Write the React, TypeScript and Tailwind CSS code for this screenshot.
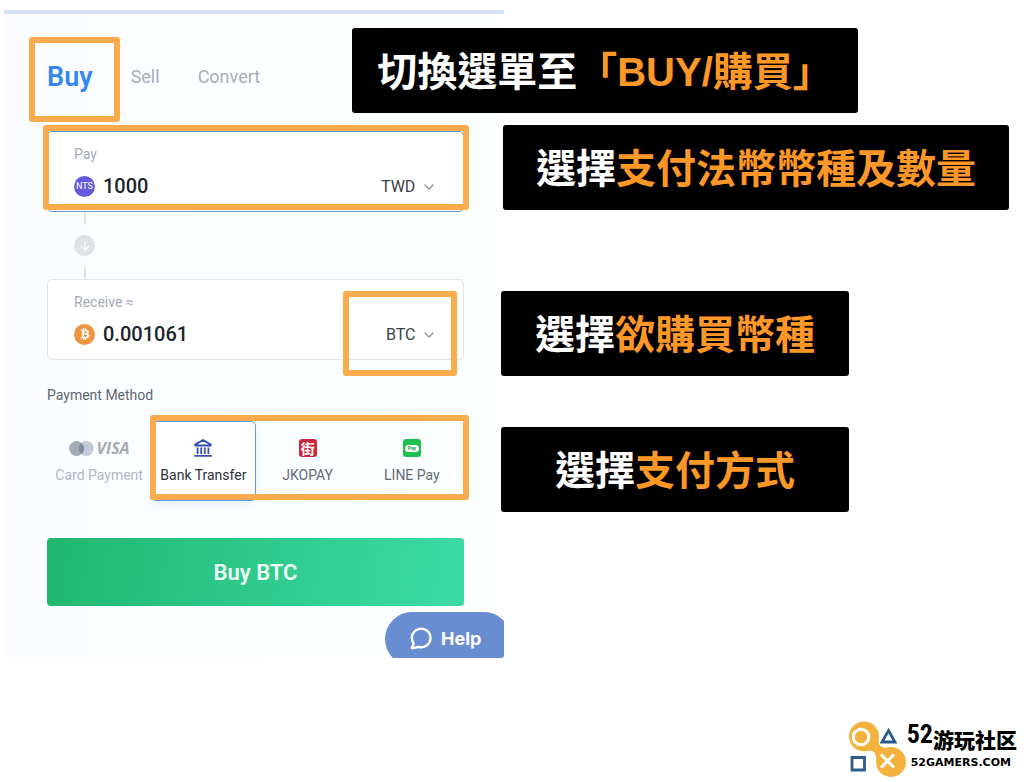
import type { ReactNode } from "react";
import { ArrowDown, ChevronDown } from "lucide-react";
import { FaBtc } from "react-icons/fa";

function Highlight({ className }: { className: string }) {
  return (
    <span
      aria-hidden="true"
      className={`pointer-events-none absolute z-10 rounded-[3px] border-6 border-[#f9ab4e] ${className}`}
    />
  );
}

function Callout({ className, lead, children }: { className: string; lead: string; children: ReactNode }) {
  return (
    <p
      className={`relative z-20 rounded-[3px] bg-black pt-[14px] pb-[10px] text-center text-[40px] leading-[61px] font-bold whitespace-nowrap text-white ${className}`}
    >
      {lead}
      <span className="text-[#fd9727]">{children}</span>
    </p>
  );
}

interface AmountBoxProps {
  id: string;
  label: string;
  value: string;
  currency: string;
  icon: ReactNode;
  borderClass: string;
  children: ReactNode;
}

function AmountBox({ id, label, value, currency, icon, borderClass, children }: AmountBoxProps) {
  return (
    <div className={`relative rounded-[5px] border bg-white pt-3 pr-[26px] pb-[13px] pl-[26px] ${borderClass}`}>
      <label htmlFor={id} className="block text-sm leading-5 text-[#a3aab9]">
        {label}
      </label>
      <div className="mt-[10px] flex h-6 items-center">
        {icon}
        <input
          id={id}
          defaultValue={value}
          className="ml-2 w-0 min-w-0 flex-1 bg-transparent text-xl leading-6 font-medium text-[#20242b] outline-none"
        />
        <div className="flex items-center gap-[5px] pt-0.5">
          <select
            aria-label={`${label} currency`}
            className="appearance-none bg-transparent text-base leading-6 text-[#3b404a] outline-none"
          >
            <option>{currency}</option>
          </select>
          <ChevronDown className="size-4 text-[#8d929b]" strokeWidth={2} />
        </div>
      </div>
      {children}
    </div>
  );
}

function BankIcon() {
  return (
    <svg viewBox="0 0 20 20" className="size-5" fill="none" stroke="#3350b0" strokeWidth="1.8">
      <path d="M2.2 6.6 10 2l7.800 4.600v.9H2.200z" strokeLinejoin="round" />
      <path d="M4.600 9.500v6.500M8.200 9.500v6.500M11.800 9.500v6.500M15.400 9.500v6.500M1.200 17.900h17.600" />
    </svg>
  );
}

function CardBrands() {
  return (
    <span className="flex h-5 items-center gap-[3px]">
      <svg viewBox="0 0 25 15" className="h-[15px] w-[25px]">
        <circle cx="17.3" cy="7.5" r="7.4" fill="#c3cbd8" />
        <circle cx="7.6" cy="7.5" r="7.4" fill="#a4acb8" />
        <path d="M12.45 1.900a7.400 7.400 0 0 1 0 11.200 7.400 7.400 0 0 1 0-11.200z" fill="#828c99" />
      </svg>
      <span className="font-['Open_Sans',sans-serif] text-base leading-5 font-bold text-[#a6abb5] italic">VISA</span>
    </span>
  );
}

function JkoIcon() {
  return (
    <span className="flex size-5 items-center justify-center">
      <span className="flex size-[18px] items-center justify-center rounded-[3px] bg-[#c9283c] font-['Noto_Sans_CJK_TC',sans-serif] text-sm leading-none font-bold text-white">
        街
      </span>
    </span>
  );
}

function LinePayIcon() {
  return (
    <span className="flex size-5 items-center justify-center">
      <span className="flex size-[18px] items-center justify-center rounded-[3px] bg-[#20c04f]">
        <span className="flex h-[7px] w-[14px] items-center justify-center rounded-full bg-white text-[5px] leading-none font-bold text-[#20a050]">
          Pay
        </span>
      </span>
    </span>
  );
}

const methods = [
  { id: "card", name: "Card Payment", icon: <CardBrands />, text: "text-[#b3b8c1]", box: "border-transparent" },
  {
    id: "bank",
    name: "Bank Transfer",
    icon: <BankIcon />,
    text: "text-[#2d323b]",
    box: "border-[#5b9cf0] bg-white shadow-[0_3px_6px_rgba(90,140,220,0.12)]",
  },
  { id: "jko", name: "JKOPAY", icon: <JkoIcon />, text: "text-[#656b76]", box: "border-transparent" },
  { id: "line", name: "LINE Pay", icon: <LinePayIcon />, text: "text-[#656b76]", box: "border-transparent" },
];

function Connector() {
  return (
    <div className="ml-[27px] flex w-[21px] flex-col items-center">
      <span className="h-3 w-0.5 bg-[#e2e4e8]" />
      <span className="my-[11px] flex size-[21px] items-center justify-center rounded-full bg-[#e0e2e7]">
        <ArrowDown className="size-[14px] text-white" strokeWidth={2} />
      </span>
      <span className="h-3 w-0.5 bg-[#e2e4e8]" />
    </div>
  );
}

function TradePanel() {
  return (
    <section className="w-[500px] shrink-0 border-t-4 border-[#d7e1f3] bg-linear-to-r from-[#fafcff] to-[#fcfffe] font-[Roboto,sans-serif]">
      <form className="pt-[47px] pr-10 pl-[43px]" onSubmit={(e) => e.preventDefault()}>
        <nav className="flex items-center gap-[38px] text-lg leading-8 text-[#a9adb5]">
          <span className="relative flex">
            <button type="button" className="text-[27px] leading-8 font-semibold text-[#3487f1]">
              Buy
            </button>
            <Highlight className="-top-6 -right-[27px] -bottom-[29px] -left-[18px]" />
          </span>
          <button type="button">Sell</button>
          <button type="button">Convert</button>
        </nav>

        <div className="mt-[38px]">
          <AmountBox
            id="pay"
            label="Pay"
            value="1000"
            currency="TWD"
            borderClass="border-[#5f9ccb]"
            icon={
              <span className="flex size-[21px] items-center justify-center rounded-full bg-[#635bdc] text-[9px] leading-none text-white">
                NTS
              </span>
            }
          >
            <Highlight className="-top-[7px] -right-[6px] bottom-px -left-[5px]" />
          </AmountBox>
          <Connector />
          <AmountBox
            id="receive"
            label="Receive ≈"
            value="0.001061"
            currency="BTC"
            borderClass="border-[#e3e5e9]"
            icon={
              <span className="flex size-[21px] items-center justify-center rounded-full bg-[#f0953f]">
                <FaBtc className="size-3 text-white" />
              </span>
            }
          >
            <Highlight className="top-[11px] right-[6px] -bottom-[17px] w-[114px]" />
          </AmountBox>
        </div>

        <fieldset className="mt-[25px]">
          <legend className="text-sm leading-5 text-[#5f6673]">Payment Method</legend>
          <div className="relative mt-4 grid grid-cols-4">
            {methods.map((m) => (
              <label
                key={m.id}
                className={`flex flex-col items-center rounded-[5px] border pt-4 pb-[15px] text-sm leading-5 whitespace-nowrap ${m.box} ${m.text}`}
              >
                <input type="radio" name="method" value={m.id} defaultChecked={m.id === "bank"} className="sr-only" />
                {m.icon}
                <span className="mt-[7px]">{m.name}</span>
              </label>
            ))}
            <Highlight className="-top-[6px] -right-[5px] bottom-px left-[103px]" />
          </div>
        </fieldset>

        <button
          type="submit"
          className="mt-[37px] w-full rounded-[4px] bg-linear-100 from-[#20b770] to-[#3cdba6] pt-[19px] pb-[17px] text-[22px] leading-8 font-semibold text-[#effcf6]"
        >
          Buy BTC
        </button>
      </form>

      <div className="mt-[6px] ml-auto h-[46px] w-[119px] overflow-hidden rounded-b-[3px]">
        <button
          type="button"
          className="flex h-[54px] w-[126px] items-center gap-2 rounded-full bg-[#688dd1] pl-[24px] font-[Inter,sans-serif] text-lg font-bold text-white"
        >
          <svg viewBox="0 0 24 24" className="size-6" fill="none" stroke="currentColor" strokeWidth="2.4" strokeLinejoin="round">
            <path d="M4.500 16.200A9.300 9.300 0 1 1 9.300 19.800c-1.900 1-4.300 1.400-6.600 1.200 1-1.500 1.800-3 1.800-4.800z" />
          </svg>
          Help
        </button>
      </div>
    </section>
  );
}

function SiteMark() {
  return (
    <a href="#" className="flex items-start text-black">
      <svg viewBox="0 0 59 58" className="h-[58px] w-[59px]" fill="none">
        <g fill="#f3b33e">
          <circle cx="16" cy="16.500" r="15" />
          <circle cx="43" cy="42" r="15" />
          <path d="M30.800 19c-.8 5.500 1 8.500 7.500 8.800L28.200 39.500c.6-6-3-9.500-8.700-8.800z" />
        </g>
        <circle cx="13" cy="17" r="7.800" stroke="#fff" strokeWidth="3" />
        <path d="m33 34.500 13 13m0-13-13 13" stroke="#fff" strokeWidth="3" />
        <path d="M40.500 10.500 47 22H34z" stroke="#2f5a8c" strokeWidth="2.800" />
        <path d="M4 37.500h12.500V50H4z" stroke="#2f5a8c" strokeWidth="2.800" />
      </svg>
      <span className="flex flex-col">
        <span className="flex items-start">
          <span className="font-['Liberation_Sans_Narrow','Roboto_Condensed',Roboto,sans-serif] text-[26px] leading-7 font-bold">52</span>
          <span className="mt-[7px] font-['Noto_Sans_CJK_SC',sans-serif] text-[21px] leading-6 font-black">游玩社区</span>
        </span>
        <span className="mt-1 ml-1 font-['DejaVu_Sans',sans-serif] text-[11px] leading-4 font-bold">52GAMERS.COM</span>
      </span>
    </a>
  );
}

export default function App() {
  return (
    <div className="flex min-h-screen flex-col bg-white pt-[10px] pl-1">
      <main className="flex items-start">
        <TradePanel />
        <aside className="-ml-[3px] flex min-w-0 flex-1 flex-col items-start pt-[18px] font-['Liberation_Sans','Noto_Sans_CJK_TC',sans-serif]">
          <Callout className="-ml-[149px] w-[506px]" lead="切換選單至">
            「BUY/購買」
          </Callout>
          <Callout className="mt-3 ml-0.5 w-[506px]" lead="選擇">
            支付法幣幣種及數量
          </Callout>
          <Callout className="mt-[81px] w-[348px]" lead="選擇">
            欲購買幣種
          </Callout>
          <Callout className="mt-[51px] w-[348px]" lead="選擇">
            支付方式
          </Callout>
        </aside>
      </main>
      <footer className="mt-auto flex justify-end pr-[9px] pb-1">
        <SiteMark />
      </footer>
    </div>
  );
}
